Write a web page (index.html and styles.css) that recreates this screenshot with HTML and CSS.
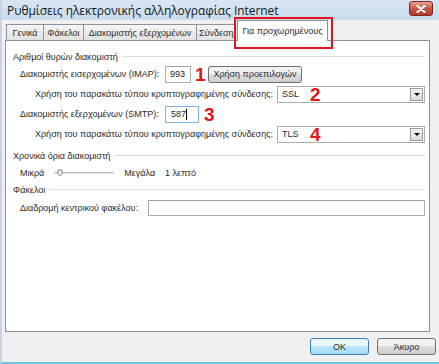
FILE: index.html
```html
<!DOCTYPE html>
<html lang="el">
<head>
  <meta charset="UTF-8">
  <title>Ρυθμίσεις ηλεκτρονικής αλληλογραφίας Internet</title>
  <link rel="stylesheet" href="styles.css">
</head>
<body>
  <div class="window">
    <div class="titlebar">
      <span class="title">Ρυθμίσεις ηλεκτρονικής αλληλογραφίας Internet</span>
      <span class="close-btn">
        <svg width="10" height="8" viewBox="0 0 10 8">
          <path d="M1.5 1 L8.5 7 M8.5 1 L1.5 7" stroke="#fff" stroke-width="2.2" stroke-linecap="round"/>
        </svg>
      </span>
    </div>

    <div class="content">
      <div class="tabs">
        <span class="tab tab-general">Γενικά</span>
        <span class="tab tab-folders">Φάκελοι</span>
        <span class="tab tab-outgoing">Διακομιστής εξερχομένων</span>
        <span class="tab tab-connection">Σύνδεση</span>
        <span class="tab tab-active">Για προχωρημένους</span>
      </div>

      <div class="panel">
        <div class="group-title"><span>Αριθμοί θυρών διακομιστή</span></div>

        <div class="row">
          <span class="label label-main">Διακομιστής εισερχομένων (IMAP):</span>
          <span class="textbox textbox-imap">993</span>
          <span class="marker marker-1">1</span>
          <span class="btn btn-defaults">Χρήση προεπιλογών</span>
        </div>

        <div class="row">
          <span class="label label-sub">Χρήση του παρακάτω τύπου κρυπτογραφημένης σύνδεσης:</span>
          <span class="combo">
            <span class="combo-value">SSL</span>
            <span class="marker marker-2">2</span>
            <span class="combo-arrow"></span>
          </span>
        </div>

        <div class="row">
          <span class="label label-main">Διακομιστής εξερχομένων (SMTP):</span>
          <span class="textbox textbox-smtp textbox-focus">587<span class="caret"></span></span>
          <span class="marker marker-3">3</span>
        </div>

        <div class="row">
          <span class="label label-sub">Χρήση του παρακάτω τύπου κρυπτογραφημένης σύνδεσης:</span>
          <span class="combo">
            <span class="combo-value">TLS</span>
            <span class="marker marker-4">4</span>
            <span class="combo-arrow"></span>
          </span>
        </div>

        <div class="group-title group-gap"><span>Χρονικά όρια διακομιστή</span></div>

        <div class="row">
          <span class="label">Μικρά</span>
          <svg class="slider" width="62" height="10" viewBox="0 0 62 10">
            <line x1="2" y1="4.5" x2="62" y2="4.5" stroke="#b9b9b9" stroke-width="1"/>
            <line x1="2" y1="5.5" x2="62" y2="5.5" stroke="#e8e8e8" stroke-width="1"/>
            <path d="M6 2 L6 6 L8 8 L10 6 L10 2 Z" fill="#f4f4f4" stroke="#8a8a8a" stroke-width="1"/>
          </svg>
          <span class="label label-large">Μεγάλα</span>
          <span class="label label-time">1 λεπτό</span>
        </div>

        <div class="group-title"><span>Φάκελοι</span></div>

        <div class="row row-folder">
          <span class="label label-folder">Διαδρομή κεντρικού φακέλου:</span>
          <span class="textbox textbox-wide"></span>
        </div>
      </div>

      <div class="footer">
        <span class="btn btn-dialog btn-ok">OK</span>
        <span class="btn btn-dialog">Άκυρο</span>
      </div>
    </div>
  </div>
</body>
</html>
```

FILE: styles.css
```css
body {
  margin: 0;
  font-family: "Liberation Sans", Arial, sans-serif;
  font-size: 9px;
  color: #2a2a2a;
  background: #f0f0f0;
}

/* Window frame */
.window {
  width: 439px;
  height: 364px;
  box-sizing: border-box;
  background: #f0f0f0;
  border-left: 2px solid #c5d5e6;
  border-bottom: 2px solid #6ec8e6;
  display: flex;
  flex-direction: column;
  overflow: hidden;
}

.titlebar {
  height: 20px;
  flex: none;
  display: flex;
  align-items: center;
  justify-content: space-between;
  padding: 0 6px 0 5px;
  background: linear-gradient(#dae6f3, #c9dbee);
}

.title {
  font-family: "Open Sans", "Noto Sans", sans-serif;
  font-size: 11.9px;
  color: #101820;
}

.close-btn {
  width: 22px;
  height: 13px;
  margin-top: -3px;
  display: flex;
  align-items: center;
  justify-content: center;
  border: 1px solid #7e2a24;
  border-radius: 3px;
  background: linear-gradient(#e8a393, #c9584a 50%, #b7372a);
}

.content {
  flex: 1;
  display: flex;
  flex-direction: column;
  padding: 4px 9px 0 3px;
}

/* Tabs */
.tabs {
  height: 16px;
  display: flex;
  align-items: flex-end;
  padding-left: 1px;
  position: relative;
  z-index: 1;
}

.tab {
  height: 16px;
  box-sizing: border-box;
  display: flex;
  align-items: center;
  justify-content: center;
  border: 1px solid #8d9199;
  border-bottom: none;
  margin-right: -1px;
  background: linear-gradient(#f6f6f6, #e2e2e2);
  white-space: nowrap;
  overflow: hidden;
}

.tab-general { width: 38px; }
.tab-folders { width: 41px; }
.tab-outgoing { width: 114px; }
.tab-connection { width: 40px; justify-content: flex-start; padding-left: 2px; }

.tab-active {
  width: 91px;
  height: 21px;
  margin-left: 2px;
  margin-bottom: -1px;
  background: #fff;
  position: relative;
  overflow: visible;
}

.tab-active::after {
  content: "";
  position: absolute;
  left: -4px;
  top: -4px;
  width: 95px;
  height: 28px;
  border: 2px solid #e3141b;
  pointer-events: none;
}

/* Panel */
.panel {
  flex: none;
  height: 292px;
  box-sizing: border-box;
  background: #fff;
  border: 1px solid #8d9199;
  padding: 9px 4px 0 7px;
}

.group-title {
  height: 14px;
  display: flex;
  align-items: center;
  gap: 4px;
}

.group-title::after {
  content: "";
  flex: 1;
  border-top: 1px solid #d5dfe5;
  border-bottom: 1px solid #fff;
}

.group-gap {
  margin-top: 5px;
}

.row {
  height: 20px;
  display: flex;
  align-items: center;
  padding-left: 7px;
  white-space: nowrap;
}

.label-main {
  width: 145px;
  flex: none;
}

.label-sub {
  margin-left: 15px;
  width: 242px;
  flex: none;
}

.label-large {
  margin-left: 10px;
}

.label-time {
  margin-left: 10px;
}

.slider {
  margin-left: 8px;
}

.row-folder {
  margin-top: 1px;
}

.label-folder {
  width: 128px;
  flex: none;
}

/* Inputs */
.textbox {
  height: 17px;
  box-sizing: border-box;
  border: 1px solid #abadb3;
  border-top-color: #a0a3aa;
  background: #fff;
  display: flex;
  align-items: center;
  padding-left: 5px;
}

.textbox-imap {
  width: 26px;
  padding-left: 4px;
}

.textbox-smtp {
  width: 34px;
}

.textbox-focus {
  border-color: #7eb4ea;
}

.caret {
  width: 1px;
  height: 11px;
  background: #000;
}

.textbox-wide {
  flex: 1;
  height: 16px;
}

.combo {
  width: 148px;
  height: 17px;
  box-sizing: border-box;
  border: 1px solid #abadb3;
  background: #fff;
  display: flex;
  align-items: center;
  padding-left: 4px;
}

.combo-value {
  width: 28px;
}

.combo-arrow {
  margin-left: auto;
  width: 13px;
  height: 13px;
  margin-right: 1px;
  box-sizing: border-box;
  border: 1px solid #9a9a9a;
  background: linear-gradient(#f3f3f3, #dcdcdc);
  display: flex;
  align-items: center;
  justify-content: center;
}

.combo-arrow::before {
  content: "";
  border-left: 3px solid transparent;
  border-right: 3px solid transparent;
  border-top: 3px solid #000;
}

/* Red annotation numbers */
.marker {
  font-family: "Liberation Sans", Arial, sans-serif;
  font-weight: bold;
  font-size: 19px;
  color: #e3141b;
  line-height: 1;
}

.marker-1 { margin: 0 4px 0 4px; width: 9px; text-align: center; }
.marker-3 { margin-left: 5px; }

/* Buttons */
.btn {
  box-sizing: border-box;
  display: flex;
  align-items: center;
  justify-content: center;
  border: 1px solid #707070;
  border-radius: 3px;
  background: linear-gradient(#f2f2f2 50%, #dddddd 50%, #cfcfcf);
}

.btn-defaults {
  width: 94px;
  height: 17px;
}

.footer {
  display: flex;
  justify-content: flex-end;
  gap: 8px;
  padding-top: 6px;
  margin-right: -6px;
}

.btn-dialog {
  width: 59px;
  height: 17px;
}

.btn-ok {
  border-color: #3c7fb1;
  background: linear-gradient(#eaf6fd 50%, #bee6fd 50%, #a7d9f5);
}
```
